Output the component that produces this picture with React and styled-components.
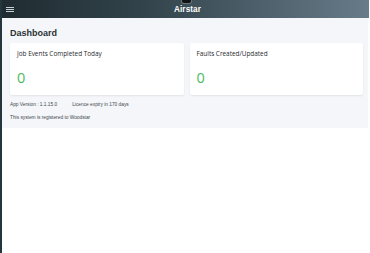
import React from "react";
import styled, { createGlobalStyle } from "styled-components";

const Global = createGlobalStyle`
  html, body { margin: 0; padding: 0; background: #ffffff; }
  body { font-family: "Liberation Sans", Arial, sans-serif; }
  * { box-sizing: border-box; }
`;

const Page = styled.div`
  width: 370px;
  height: 253px;
  display: flex;
  flex-direction: column;
  border-left: 2px solid #24363c;
  background: #ffffff;
  position: relative;
`;

const Header = styled.header`
  height: 18px;
  flex: none;
  margin-right: 1px;
  display: flex;
  align-items: center;
  justify-content: center;
  position: relative;
  background: linear-gradient(90deg, #1f2c31 0%, #33444c 40%, #687b89 100%);
`;

const MenuButton = styled.div`
  position: absolute;
  left: 4px;
  top: 7px;
  width: 8px;
  height: 5px;
  display: flex;
  flex-direction: column;
  justify-content: space-between;
  span {
    display: block;
    height: 1px;
    background: #c9d0d4;
  }
`;

const Notch = styled.div`
  position: absolute;
  left: 180px;
  top: 0;
  width: 9px;
  height: 3px;
  background: #101314;
  box-shadow: 0 0 0 1px #6a7478;
  border-radius: 0 0 2px 2px;
  z-index: 2;
`;

const Title = styled.div`
  color: #ffffff;
  font-weight: 700;
  font-size: 8.2px;
  letter-spacing: 0.1px;
  margin-left: 4px;
`;

const Main = styled.main`
  background: #f4f6f9;
  margin-right: 2px;
  padding: 9px 5px 7px 8px;
  display: flex;
  flex-direction: column;
`;

const PageTitle = styled.h1`
  margin: 0 0 4px 0;
  font-size: 9px;
  font-weight: 700;
  color: #2b3236;
  line-height: 12px;
`;

const CardRow = styled.div`
  display: grid;
  grid-template-columns: 1fr 1fr;
  gap: 6px;
`;

const Card = styled.div`
  background: #ffffff;
  border-radius: 2px;
  height: 52px;
  padding: 6px 7px;
  box-shadow: 0 1px 2px rgba(0, 0, 0, 0.08);
  display: flex;
  flex-direction: column;
`;

const CardLabel = styled.div`
  font-family: "Open Sans", sans-serif;
  font-size: 6.4px;
  font-weight: 500;
  color: #1f272b;
  line-height: 9px;
`;

const CardValue = styled.div`
  font-family: "Open Sans", sans-serif;
  font-size: 14.5px;
  color: #4cbb5f;
  line-height: 16px;
  margin-top: 12px;
`;

const InfoRow = styled.div`
  display: flex;
  gap: 15px;
  margin-top: 6px;
  font-size: 4.8px;
  color: #3f484d;
  line-height: 7px;
`;

const InfoLine = styled.div`
  margin-top: 6px;
  font-size: 4.8px;
  color: #3f484d;
  line-height: 7px;
`;

export default function App() {
  return (
    <>
      <Global />
      <Page>
        <Header>
          <MenuButton>
            <span />
            <span />
            <span />
          </MenuButton>
          <Notch />
          <Title>Airstar</Title>
        </Header>
        <Main>
          <PageTitle>Dashboard</PageTitle>
          <CardRow>
            <Card>
              <CardLabel>Job Events Completed Today</CardLabel>
              <CardValue>0</CardValue>
            </Card>
            <Card>
              <CardLabel>Faults Created/Updated</CardLabel>
              <CardValue>0</CardValue>
            </Card>
          </CardRow>
          <InfoRow>
            <span>App Version : 1.1.15.0</span>
            <span>Licence expiry in 170 days</span>
          </InfoRow>
          <InfoLine>This system is registered to Woodstar</InfoLine>
        </Main>
      </Page>
    </>
  );
}
